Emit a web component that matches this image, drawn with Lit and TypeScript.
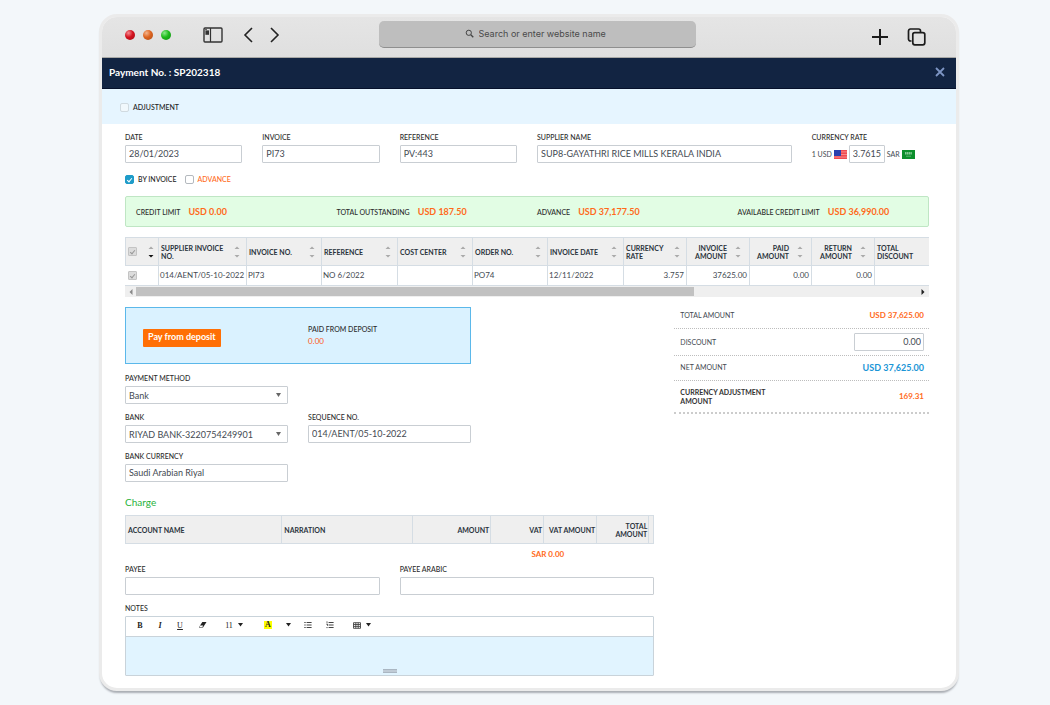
import { LitElement, html, svg, css, nothing } from "lit";
import { customElement, state } from "lit/decorators.js";
import { classMap } from "lit/directives/class-map.js";

interface Column {
  title: string;
  width: number | null;
  value: string;
  right?: boolean;
  sortable?: boolean;
}

const INVOICE_COLUMNS: Column[] = [
  { title: "SUPPLIER INVOICE NO.", width: 88, value: "014/AENT/05-10-2022", sortable: true },
  { title: "INVOICE NO.", width: 75, value: "PI73", sortable: true },
  { title: "REFERENCE", width: 76, value: "NO 6/2022", sortable: true },
  { title: "COST CENTER", width: 75, value: "", sortable: true },
  { title: "ORDER NO.", width: 75, value: "PO74", sortable: true },
  { title: "INVOICE DATE", width: 76, value: "12/11/2022", sortable: true },
  { title: "CURRENCY RATE", width: 63, value: "3.757", sortable: true },
  { title: "INVOICE AMOUNT", width: 63, value: "37625.00", right: true, sortable: true },
  { title: "PAID AMOUNT", width: 62, value: "0.00", right: true, sortable: true },
  { title: "RETURN AMOUNT", width: 63, value: "0.00", right: true, sortable: true },
  { title: "TOTAL DISCOUNT", width: null, value: "" },
];

const CREDIT = [
  ["CREDIT LIMIT", "USD 0.00"],
  ["TOTAL OUTSTANDING", "USD 187.50"],
  ["ADVANCE", "USD 37,177.50"],
  ["AVAILABLE CREDIT LIMIT", "USD 36,990.00"],
];

const sortIcon = (active = false) => html`
  <svg class="sort" width="6" height="12" viewBox="0 0 6 12" aria-hidden="true">
    <path d="M0.5 3 L3 0.5 L5.5 3z" fill="#aaa" />
    <path d="M0.5 9 L3 11.5 L5.5 9z" fill=${active ? "#111" : "#aaa"} />
  </svg>
`;

const caret = html`<svg width="5" height="4" viewBox="0 0 5 4" aria-hidden="true"><path d="M0 0h5L2.5 3.5z" fill="#222" /></svg>`;

@customElement("app-root")
export class AppRoot extends LitElement {
  @state() private byInvoice = true;

  static styles = css`
    :host {
      display: block;
      box-sizing: border-box;
      min-height: 100vh;
      padding: 14px 91px 16px 99px;
      background: #f3f7fa;
      font-family: Lato, "Liberation Sans", sans-serif;
      font-size: 9px;
      color: #444a52;
    }
    *, *::before, *::after { box-sizing: border-box; }
    button, input, select, textarea { font: inherit; color: inherit; margin: 0; }
    button { border: 0; padding: 0; background: none; }
    svg { display: block; flex: none; }

    .window {
      border: 3px solid #ebebeb;
      border-radius: 18px;
      background: #fff;
      overflow: hidden;
      box-shadow: 0 3px 2px -1px #a9adb3;
    }
    .chrome {
      display: grid;
      grid-template-columns: 277px 1fr 260px;
      height: 41px;
      padding-bottom: 4px;
      align-items: center;
      background: linear-gradient(#e5e5e5, #dfdfdf);
      border-bottom: 1px solid #a9a9a6;
    }
    .chrome-left { display: flex; align-items: center; padding-left: 23px; }
    .dots { display: flex; gap: 8px; margin-right: 32px; }
    .dot { width: 10px; height: 10px; border-radius: 50%; }
    .dot.red { background: radial-gradient(circle at 35% 30%, #f78a90, #d3121f 45%, #a30d17); }
    .dot.orange { background: radial-gradient(circle at 35% 30%, #f4b48c, #dd6420 45%, #a94a17); }
    .dot.green { background: radial-gradient(circle at 35% 30%, #8be88a, #1dbb1b 45%, #128a12); }
    .navs { display: flex; gap: 17px; margin-left: 20px; }
    .search {
      display: flex;
      align-self: start;
      align-items: center;
      justify-content: center;
      gap: 5px;
      height: 27px;
      margin-top: 4px;
      padding-bottom: 1px;
      border-radius: 5px;
      background: #bebebe;
      border-bottom: 1px solid #8f8f8f;
    }
    .search input {
      width: 132px;
      border: 0;
      padding: 0;
      background: none;
      outline: 0;
      font-family: Inter, sans-serif;
      font-size: 9px;
    }
    .search input::placeholder { color: #4a4a4a; opacity: 1; }
    .chrome-right { display: flex; justify-content: flex-end; gap: 18px; padding: 3px 29px 0 0; }

    .title {
      display: flex;
      align-items: center;
      justify-content: space-between;
      height: 31px;
      padding: 0 11px 2px 7px;
      background: #122442;
      color: #fff;
      border-bottom: 1px solid #06112b;
    }
    .title h1 { margin: 0; font-size: 10px; font-weight: 700; }
    .band { height: 35px; padding: 1px 18px 0; background: #e6f5ff; display: flex; align-items: center; }
    .check { display: flex; align-items: center; gap: 4px; font-size: 7px; line-height: 10px; color: #222; font-weight: 500; }
    .check.advance { color: #ff6a1a; }
    .box {
      appearance: none;
      display: grid;
      place-items: center;
      width: 9px;
      height: 9px;
      border: 1px solid #b4b9be;
      border-radius: 2px;
      background: #fff;
    }
    .box.soft { border-color: #d0dae0; background: #f1f8fc; }
    .box.on { background: #1e9cc9; border-color: #1e9cc9; }
    .box.grey { background: #dcdcdc; border-color: #c4c4c4; border-radius: 1px; }
    .box.on::after, .box.grey::after {
      content: "";
      width: 3px;
      height: 5px;
      border: solid #fff;
      border-width: 0 1px 1px 0;
      transform: rotate(40deg);
    }
    .box.grey::after { border-color: #999; }

    .body { padding: 8px 27px 12px 23px; }
    .grid6 { display: grid; grid-template-columns: repeat(6, minmax(0, 1fr)); gap: 20px; }
    .grid3 { display: grid; grid-template-columns: repeat(3, minmax(0, 1fr)); gap: 8px 20px; }
    .grid2 { display: grid; grid-template-columns: repeat(2, minmax(0, 1fr)); gap: 20px; }
    .span2 { grid-column: span 2; }
    .span4 { grid-column: span 4; }
    .first { grid-column: 1; }
    .field { display: flex; flex-direction: column; gap: 3px; min-width: 0; }
    .label { font-size: 7px; line-height: 10px; font-weight: 500; color: #2b2b2b; }
    .input {
      display: block;
      width: 100%;
      height: 18px;
      padding: 0 3px 2px;
      border: 1px solid #c9ced3;
      border-radius: 1px;
      background: #fff;
      outline: 0;
    }
    .select {
      appearance: none;
      padding: 0 14px 0 3px;
      background: #fff url("data:image/svg+xml,%3Csvg xmlns='http://www.w3.org/2000/svg' width='5' height='4'%3E%3Cpath d='M0 0h5L2.5 4z' fill='%23666'/%3E%3C/svg%3E") no-repeat right 6px center;
    }
    .rate { display: flex; align-items: center; gap: 2px; height: 18px; font-size: 7px; white-space: nowrap; }
    .rate .input { width: 36px; font-size: 9px; }

    .modes { display: flex; gap: 8px; margin-top: 11px; }
    .credit {
      display: grid;
      grid-template-columns: repeat(4, 1fr);
      align-items: center;
      height: 31px;
      margin: 12px 0 10px;
      background: #e2fde4;
      border: 1px solid #bfe6c4;
      border-radius: 2px;
    }
    .credit-item { display: flex; align-items: center; gap: 8px; padding-left: 10px; white-space: nowrap; }
    .amount { font-size: 9px; font-weight: 700; color: #ff6a1a; }
    .amount.small { font-size: 8px; }
    .amount.blue { color: #1b95d6; }

    table { width: 100%; border-collapse: collapse; table-layout: fixed; }
    th {
      height: 28px;
      padding: 0 3px 0 2px;
      background: #efefef;
      border: 1px solid #d5dde4;
      font-size: 7px;
      line-height: 8px;
      font-weight: 700;
      color: #2a333c;
      text-align: left;
    }
    td { height: 20px; padding: 0 2px 1px 1px; border: 1px solid #d5dde4; font-size: 8px; white-space: nowrap; }
    .invoices th:last-child, .invoices td:last-child { border-right: 0; }
    .invoices td:first-child { border-left-color: #fff; }
    .head { display: flex; align-items: center; justify-content: space-between; }
    .sort { margin-right: 3px; }
    .right, .right .head { text-align: right; justify-content: flex-end; }
    .right .sort { margin: 0 5px 0 8px; }
    .pick { padding: 0 2px; }
    .pick .sort { margin-right: 2px; }
    .scroll { display: flex; align-items: center; gap: 3px; height: 11px; padding: 0 4px; background: #efefef; }
    .track { flex: 1; display: flex; height: 9px; }
    .thumb { background: #c1c1c1; }

    .lower { margin-top: 10px; }
    .deposit {
      grid-column: span 2;
      display: grid;
      grid-template-columns: repeat(2, minmax(0, 1fr));
      gap: 20px;
      align-items: center;
      height: 57px;
      margin-bottom: 1px;
      background: #daf2ff;
      border: 1px solid #5bb8ea;
      line-height: 10px;
    }
    .pay {
      justify-self: start;
      height: 18px;
      margin: 4px 0 0 17px;
      padding: 0 5px 1px;
      border-radius: 1px;
      background: #ff6f05;
      color: #fff;
      font-weight: 700;
    }
    .paid { display: flex; flex-direction: column; gap: 2px; margin-bottom: 2px; }
    .paid .value { color: #ff5a1a; font-size: 8px; }
    .charge-title { margin: 13px 0 6px; font-size: 10px; line-height: 14px; font-weight: 400; color: #27b23a; }
    .charge .right { padding: 0 1px; }
    .charge tfoot td { height: 20px; padding: 0 0 0 8px; border: 0; text-align: center; }

    .payees { margin-bottom: 8px; }
    .editor { border: 1px solid #c9d3da; border-radius: 1px; position: relative; }
    .tools { display: flex; align-items: center; height: 20px; padding: 0 0 2px 4px; border-bottom: 1px solid #c9d3da; }
    .tool {
      display: flex;
      align-items: center;
      justify-content: center;
      gap: 5px;
      width: 20px;
      height: 16px;
      font-family: "Liberation Serif", serif;
      font-size: 8px;
      color: #222;
    }
    .tool.wide { width: 24px; }
    .tool.gap { margin-left: 8px; }
    .tool.sep { margin-left: 12px; }
    .tool.b { font-weight: 700; }
    .tool.i { font-style: italic; font-weight: 700; }
    .tool.u { text-decoration: underline; }
    .mark { padding: 0 1px; line-height: 8px; background: #ff0; font-weight: 700; }
    .notes { display: block; width: 100%; height: 38px; border: 0; padding: 4px; resize: none; background: #e1f4ff; outline: 0; }
    .grip { position: absolute; left: 50%; bottom: 2px; width: 14px; height: 4px; margin-left: -7px; background: #c0cbd6; border-block: 1px solid #aab6c2; }

    .total {
      display: flex;
      align-items: center;
      justify-content: space-between;
      min-height: 25px;
      padding: 0 5px 2px 6px;
      border-bottom: 1px dotted #bdbdbd;
      font-size: 7px;
      line-height: 9px;
    }
    .total.top { min-height: 22px; padding-bottom: 4px; }
    .total.tall { min-height: 27px; padding-bottom: 0; }
    .total.last { min-height: 33px; padding-bottom: 0; border-bottom: 2px dotted #ccc; font-weight: 700; color: #333; }
    .total .name { width: 100px; }
    .total .input { width: 70px; font-size: 9px; text-align: right; padding-right: 2px; }
  `;

  private field(id: string, label: string, value: string, cls = "") {
    return html`<div class="field ${cls}">
      <label class="label" for=${id}>${label}</label>
      <input class="input" id=${id} type="text" .value=${value} />
    </div>`;
  }

  private select(id: string, label: string, value: string) {
    return html`<div class="field first">
      <label class="label" for=${id}>${label}</label>
      <select class="input select" id=${id}><option>${value}</option></select>
    </div>`;
  }

  private renderChrome() {
    return html`<header class="chrome">
      <div class="chrome-left">
        <div class="dots"><span class="dot red"></span><span class="dot orange"></span><span class="dot green"></span></div>
        <button aria-label="Sidebar">
          <svg width="20" height="16" viewBox="0 0 20 16" fill="none" stroke="#333">
            <rect x="1" y="1" width="18" height="14" rx="1" stroke-width="1.4" />
            <path d="M7.5 1v14" stroke-width="1.2" />
            <rect x="2.4" y="3.4" width="3.6" height="4.4" fill="#333" stroke="none" />
            <path d="M2 2.6h2" stroke-width="0.8" />
          </svg>
        </button>
        <div class="navs">
          <button aria-label="Back"><svg width="10" height="16" viewBox="0 0 10 16" fill="none" stroke="#222" stroke-width="1.6"><path d="M9 1L2 8l7 7" /></svg></button>
          <button aria-label="Forward"><svg width="10" height="16" viewBox="0 0 10 16" fill="none" stroke="#222" stroke-width="1.6"><path d="M1 1l7 7-7 7" /></svg></button>
        </div>
      </div>
      <label class="search">
        <svg width="9" height="9" viewBox="0 0 9 9" fill="none" stroke="#444"><circle cx="3.8" cy="3.8" r="2.6" /><path d="M5.8 5.8L8.3 8.3" stroke-width="1.3" /></svg>
        <input type="text" aria-label="Address" placeholder="Search or enter website name" />
      </label>
      <div class="chrome-right">
        <button aria-label="New tab"><svg width="18" height="18" viewBox="0 0 18 18" stroke="#1c1c1c" stroke-width="2"><path d="M9 1v16M1 9h16" /></svg></button>
        <button aria-label="Tabs">
          <svg width="20" height="18" viewBox="0 0 20 18" fill="none" stroke="#1c1c1c" stroke-width="1.7">
            <path d="M4.5 13H3.4A1.9 1.9 0 0 1 1.5 11V2.9A1.9 1.9 0 0 1 3.4 1H11.5a2 2 0 0 1 2 2V4" />
            <rect x="5.8" y="4.6" width="12" height="12.2" rx="2" />
          </svg>
        </button>
      </div>
    </header>`;
  }

  private renderInvoices() {
    return html`<table class="invoices">
        <colgroup>
          <col style="width:33px" />
          ${INVOICE_COLUMNS.map((c) => html`<col style=${c.width ? `width:${c.width}px` : ""} />`)}
        </colgroup>
        <thead>
          <tr>
            <th class="pick"><div class="head"><input class="box grey" type="checkbox" checked disabled aria-label="Select all" />${sortIcon(true)}</div></th>
            ${INVOICE_COLUMNS.map(
              (c) => html`<th class=${classMap({ right: !!c.right })}><div class="head"><span>${c.title}</span>${c.sortable ? sortIcon() : nothing}</div></th>`
            )}
          </tr>
        </thead>
        <tbody>
          <tr>
            <td class="pick"><input class="box grey" type="checkbox" checked disabled aria-label="Select invoice" /></td>
            ${INVOICE_COLUMNS.map((c) => html`<td class=${classMap({ right: !!c.right || c.title === "CURRENCY RATE" })}>${c.value}</td>`)}
          </tr>
        </tbody>
      </table>
      <div class="scroll">
        <svg width="4" height="6" viewBox="0 0 4 6"><path d="M3.5 0v6L0.5 3z" fill="#8a8a8a" /></svg>
        <div class="track"><div class="thumb" style="width:71.4%"></div></div>
        <svg width="4" height="6" viewBox="0 0 4 6"><path d="M0.5 0v6L3.5 3z" fill="#222" /></svg>
      </div>`;
  }

  private renderEditor() {
    const list = (x: number) => svg`<path d="M${x} 1.5h5M${x} 4h5M${x} 6.5h5" />`;
    return html`<div class="field">
      <label class="label" for="notes">NOTES</label>
      <div class="editor">
        <div class="tools">
          <button class="tool b">B</button>
          <button class="tool i">I</button>
          <button class="tool u">U</button>
          <button class="tool wide" aria-label="Clear format">
            <svg width="9" height="8" viewBox="0 0 9 8"><path d="M4.3 1h4.2L5 6.5H0.8z" fill="#222" /><path d="M2.2 4.6h3L4.4 6H1.4z" fill="#fff" /></svg>
          </button>
          <button class="tool wide gap">11 ${caret}</button>
          <button class="tool sep" aria-label="Text color"><span class="mark">A</span></button>
          <button class="tool" aria-label="More colors">${caret}</button>
          <button class="tool" aria-label="Bulleted list">
            <svg width="8" height="8" viewBox="0 0 8 8" stroke="#444" stroke-width="1">${list(2.6)}<path d="M0.3 1.5h1.4M0.3 4h1.4M0.3 6.5h1.4" /></svg>
          </button>
          <button class="tool wide" aria-label="Numbered list">
            <svg width="8" height="8" viewBox="0 0 8 8" stroke="#444" stroke-width="1">${list(2.6)}<path d="M1 0.3v2M0.5 3.2h1v1.6M0.3 6.6h1.4" stroke-width="0.8" /></svg>
          </button>
          <button class="tool wide gap" aria-label="Table">
            <svg width="8" height="7" viewBox="0 0 8 7" fill="none" stroke="#444" stroke-width="0.9"><path d="M0.5 0.7h7v5.6h-7zM0.5 2.5h7M0.5 4.4h7M2.8 0.7v5.6M5.2 0.7v5.6" /></svg>
            ${caret}
          </button>
        </div>
        <textarea class="notes" id="notes"></textarea>
        <span class="grip"></span>
      </div>
    </div>`;
  }

  render() {
    return html`<main class="window">
      ${this.renderChrome()}
      <div class="title">
        <h1>Payment No. : SP202318</h1>
        <button aria-label="Close"><svg width="10" height="10" viewBox="0 0 10 10" stroke="#7d95c4" stroke-width="1.8"><path d="M1 1l8 8M9 1L1 9" /></svg></button>
      </div>
      <div class="band"><label class="check"><input class="box soft" type="checkbox" />ADJUSTMENT</label></div>
      <div class="body">
        <div class="grid6">
          ${this.field("date", "DATE", "28/01/2023")}
          ${this.field("invoice", "INVOICE", "PI73")}
          ${this.field("reference", "REFERENCE", "PV:443")}
          ${this.field("supplier", "SUPPLIER NAME", "SUP8-GAYATHRI RICE MILLS KERALA INDIA", "span2")}
          <div class="field">
            <label class="label" for="rate">CURRENCY RATE</label>
            <div class="rate">
              <span>1 USD</span>
              <svg width="13" height="9" viewBox="0 0 13 9"><rect width="13" height="9" fill="#f04a50" /><path d="M0 1.9h13M0 4.5h13M0 7.1h13" stroke="#f79a9c" stroke-width="0.8" /><rect width="7" height="6" fill="#2a3fae" /></svg>
              <input class="input" id="rate" type="text" .value=${"3.7615"} />
              <span>SAR</span>
              <svg width="13" height="9" viewBox="0 0 13 9"><rect width="13" height="9" fill="#0c8f2c" /><path d="M3 2.8h7M3 3.9h7" stroke="#c4e8cc" stroke-width="0.9" stroke-dasharray="1.4 0.4" /><path d="M4 6.2h5" stroke="#8fd09e" stroke-width="0.6" /></svg>
            </div>
          </div>
        </div>
        <div class="modes">
          <label class="check"><input class="box ${classMap({ on: this.byInvoice })}" type="checkbox" .checked=${this.byInvoice} @change=${() => (this.byInvoice = !this.byInvoice)} />BY INVOICE</label>
          <label class="check advance"><input class="box" type="checkbox" />ADVANCE</label>
        </div>
        <section class="credit">
          ${CREDIT.map(([name, value]) => html`<div class="credit-item"><span class="label">${name}</span><span class="amount">${value}</span></div>`)}
        </section>
        ${this.renderInvoices()}
        <div class="grid6 lower">
          <div class="span4">
            <div class="grid3">
              <div class="deposit">
                <button class="pay">Pay from deposit</button>
                <div class="paid"><span class="label">PAID FROM DEPOSIT</span><span class="value">0.00</span></div>
              </div>
              ${this.select("method", "PAYMENT METHOD", "Bank")}
              ${this.select("bank", "BANK", "RIYAD BANK-3220754249901")}
              ${this.field("sequence", "SEQUENCE NO.", "014/AENT/05-10-2022")}
              ${this.field("currency", "BANK CURRENCY", "Saudi Arabian Riyal", "first")}
            </div>
            <h2 class="charge-title">Charge</h2>
            <table class="charge">
              <colgroup>
                <col /><col style="width:131px" /><col style="width:78px" /><col style="width:53px" /><col style="width:53px" /><col style="width:52px" /><col style="width:5px" />
              </colgroup>
              <thead>
                <tr>
                  <th>ACCOUNT NAME</th><th>NARRATION</th><th class="right">AMOUNT</th><th class="right">VAT</th><th class="right">VAT AMOUNT</th><th class="right">TOTAL AMOUNT</th><th class="right"></th>
                </tr>
              </thead>
              <tfoot>
                <tr><td colspan="3"></td><td colspan="2"><span class="amount small">SAR 0.00</span></td><td colspan="2"></td></tr>
              </tfoot>
            </table>
            <div class="grid2 payees">
              ${this.field("payee", "PAYEE", "")}
              ${this.field("payee-ar", "PAYEE ARABIC", "")}
            </div>
            ${this.renderEditor()}
          </div>
          <div class="span2">
            <div class="total top"><span class="name">TOTAL AMOUNT</span><span class="amount small">USD 37,625.00</span></div>
            <div class="total tall"><label class="name" for="discount">DISCOUNT</label><input class="input" id="discount" type="text" .value=${"0.00"} /></div>
            <div class="total"><span class="name">NET AMOUNT</span><span class="amount blue">USD 37,625.00</span></div>
            <div class="total last"><span class="name">CURRENCY ADJUSTMENT AMOUNT</span><span class="amount small">169.31</span></div>
          </div>
        </div>
      </div>
    </main>`;
  }
}
